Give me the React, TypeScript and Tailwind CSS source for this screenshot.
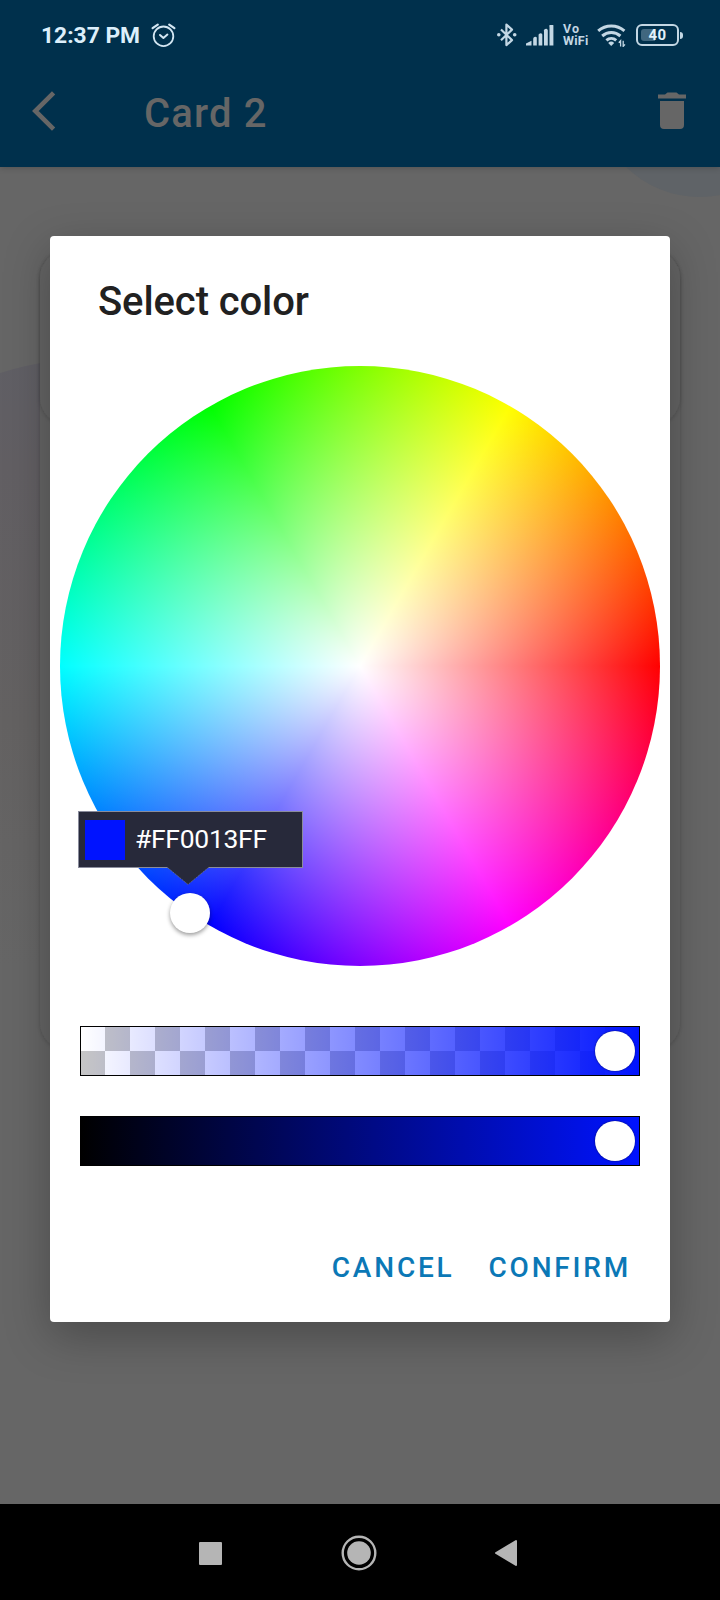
import React from "react";

function AlarmIcon() {
  return (
    <svg width="25" height="25" viewBox="0 0 25 25" fill="none" stroke="#d3e6f2" strokeWidth="1.8" strokeLinecap="round" strokeLinejoin="round">
      <circle cx="12.5" cy="13.3" r="9.8" />
      <path d="M9 12l3.4 3 4-3.4" strokeWidth="2" />
      <path d="M1.6 5.2L6.8 1.6M23.4 5.2l-5.2-3.6" strokeWidth="2.2" />
    </svg>
  );
}

function BluetoothIcon() {
  return (
    <svg width="20" height="24" viewBox="0 0 20 24" fill="none" stroke="#c3d7e4" strokeWidth="2.2" strokeLinejoin="round">
      <path d="M4 6.500l11 10.600-5.600 5V1.600l5.600 5-11 10.600" />
      <circle cx="1.8" cy="11.8" r="1.8" fill="#c3d7e4" stroke="none" />
      <circle cx="17.7" cy="11.8" r="1.8" fill="#c3d7e4" stroke="none" />
    </svg>
  );
}

function SignalIcon() {
  return (
    <svg width="28" height="21" viewBox="0 0 28 21" fill="#c3d7e4">
      <path d="M0 20.600V18.600L5.500 15.800V20.600Z" />
      <path d="M7.200 20.600V14a2 2 0 0 1 3.600-1.400V20.600Z" />
      <path d="M12.600 20.600V11a2 2 0 0 1 3.700-1.500V20.600Z" />
      <path d="M18 20.600V6.800a2 2 0 0 1 3.800-1.600V20.600Z" />
      <path d="M23.500 20.600V1.900a2 2 0 0 1 3.900-1.300V20.600Z" />
    </svg>
  );
}

function WifiIcon() {
  return (
    <svg width="29" height="23" viewBox="0 0 29 23" fill="none" stroke="#c3d7e4" strokeWidth="3">
      <path d="M1.200 6.800a20 20 0 0 1 26.200 0" />
      <path d="M5.200 12a13.800 13.800 0 0 1 18.200 0" />
      <path d="M9.400 16.400a7.500 7.500 0 0 1 9.800 0" />
      <path d="M11.200 18.900a4.400 4.400 0 0 1 6 0l-3 3.200z" fill="#c3d7e4" stroke="none" />
      <path d="M23.600 22.400V16.800l-1.800 2M26.200 16.800v5.600l1.800-2" strokeWidth="1.3" />
    </svg>
  );
}

function BatteryIcon() {
  return (
    <div className="flex items-center">
      <div className="relative flex h-[22px] w-[43px] items-center justify-center rounded-[6px] border-[2.5px] border-[#c3d7e4]">
        <div className="absolute left-[3px] top-[3px] h-[12px] w-[14px] rounded-l-[3px] bg-[#40677f]" />
        <span className="relative text-[15px] font-bold leading-none tracking-[0.3px] text-[#e3f1fa]">40</span>
      </div>
      <div className="ml-px h-[7px] w-[3px] rounded-r bg-[#c3d7e4]" />
    </div>
  );
}

function StatusBar() {
  return (
    <div className="flex h-[70px] items-center pl-[41px] pr-[37px]">
      <span className="w-[99px] whitespace-nowrap pt-[2px] text-[22.8px] font-bold leading-none text-[#dceffb]">12:37 PM</span>
      <div className="ml-[11px]"><AlarmIcon /></div>
      <div className="ml-auto flex items-center">
        <BluetoothIcon />
        <div className="ml-[9px]"><SignalIcon /></div>
        <div className="ml-[9px] flex w-[26px] flex-col text-[12.5px] font-bold leading-[12px] tracking-[0.3px] text-[#c3d7e4]">
          <span className="tracking-[1px]">Vo</span>
          <span>WiFi</span>
        </div>
        <div className="ml-[8px]"><WifiIcon /></div>
        <div className="ml-[10px]"><BatteryIcon /></div>
      </div>
    </div>
  );
}

function AppBar() {
  return (
    <div className="flex h-[97px] items-start pl-[32px] pr-[34px]">
      <svg className="mt-[21px]" width="24" height="40" viewBox="0 0 24 40" fill="none" stroke="#666" strokeWidth="4.6">
        <path d="M21.600 1.800L3.300 20l18.300 18.200" />
      </svg>
      <h1 className="ml-[88px] mt-[20px] whitespace-nowrap text-[40px] font-medium leading-[47px] tracking-[1.15px] text-[#666]">Card 2</h1>
      <svg className="ml-auto mt-[22px]" width="28" height="37" viewBox="0 0 28 37" fill="#666">
        <path d="M0 2.500h7L9.500 .5h9L21 2.500h7v4H0zM2 9h24v24a4 4 0 0 1-4 4H6a4 4 0 0 1-4-4z" />
      </svg>
    </div>
  );
}

function Backdrop() {
  return (
    <svg className="absolute inset-0" width="720" height="1337" viewBox="0 0 720 1337">
      <defs>
        <linearGradient id="blob" x1="0" y1="0" x2="0" y2="1">
          <stop offset="0" stopColor="#605f65" />
          <stop offset="0.18" stopColor="#625f63" />
          <stop offset="0.6" stopColor="#646262" />
          <stop offset="1" stopColor="#666666" />
        </linearGradient>
        <filter id="soft" x="-10%" y="-10%" width="120%" height="120%">
          <feDropShadow dx="0" dy="1" stdDeviation="2" floodColor="#000" floodOpacity="0.2" />
        </filter>
      </defs>
      <circle cx="700" cy="-76" r="106" fill="#5f6367" />
      <path d="M0 206Q50 190 110 190V800H0Z" fill="url(#blob)" />
      <g fill="#656565" filter="url(#soft)">
        <rect x="40" y="83" width="640" height="800" rx="28" />
      </g>
      <g fill="#656565" filter="url(#soft)">
        <rect x="40" y="83" width="640" height="175" rx="28" />
      </g>
    </svg>
  );
}

function ColorWheel() {
  return (
    <div className="relative mx-auto h-[600px] w-[600px]">
      <div className="h-full w-full rounded-full bg-[radial-gradient(circle_closest-side,#fff,rgba(255,255,255,0)),conic-gradient(from_90deg,#f00,#f0f,#00f,#0ff,#0f0,#ff0,#f00)]" />
      <div className="absolute left-[110px] top-[527px] h-[40px] w-[40px] rounded-full bg-white shadow-[0_2px_4px_rgba(0,0,0,0.4)]" />
      <div className="absolute left-[18px] top-[445px] flex h-[57px] w-[225px] items-center border border-[#8a8c9c] bg-[#27293a] pl-[6px]">
        <div className="h-[40px] w-[40px] bg-[#0013ff]" />
        <span className="ml-[10px] text-[26.5px] leading-none tracking-[-0.3px] text-white">#FF0013FF</span>
        <svg className="absolute left-[88px] top-[54.5px]" width="42" height="18" viewBox="0 0 42 18">
          <path d="M0 0H42L21 17.500Z" fill="#27293a" />
          <path d="M1 1L21 17.500L41 1" fill="none" stroke="#6c7083" strokeWidth="0.8" strokeDasharray="2 1" />
        </svg>
      </div>
    </div>
  );
}

function Thumb() {
  return <div className="h-[40px] w-[40px] rounded-full bg-white shadow-[0_0_2px_rgba(0,0,0,0.6)]" />;
}

function Sliders() {
  return (
    <div className="mx-[30px] mt-[60px] flex flex-col gap-[40px]">
      <div className="relative flex h-[50px] items-center justify-end bg-[linear-gradient(to_right,rgba(0,19,255,0),#0013ff),conic-gradient(#c6c6c6_25%,#fff_0_50%,#c6c6c6_0_75%,#fff_0)] bg-[size:100%_100%,50px_50px] pr-[5px]">
        <div className="absolute inset-0 border border-black" />
        <Thumb />
      </div>
      <div className="flex h-[50px] items-center justify-end border border-black bg-[linear-gradient(to_right,#000,#0013ff)] pr-[4px]">
        <Thumb />
      </div>
    </div>
  );
}

function Dialog() {
  return (
    <div className="absolute left-[50px] top-[236px] flex h-[1086px] w-[620px] flex-col rounded-[4px] bg-white shadow-[0_14px_46px_rgba(0,0,0,0.28)]">
      <h2 className="ml-[48px] mt-[42px] h-[88px] whitespace-nowrap text-[40px] font-medium leading-[47px] tracking-[-0.1px] text-[#212121]">Select color</h2>
      <ColorWheel />
      <Sliders />
      <div className="mt-[82px] flex justify-end gap-[34px] pr-[39px] text-[28px] font-medium leading-[40px] tracking-[2.8px] text-[#0b78b6]">
        <button>CANCEL</button>
        <button>CONFIRM</button>
      </div>
    </div>
  );
}

function NavBar() {
  return (
    <div className="flex h-[96px] items-center bg-black pl-[199px] pt-[2px]">
      <div className="h-[23px] w-[23px] rounded-[1px] bg-[#b5b5b5]" />
      <svg className="ml-[119px]" width="36" height="36" viewBox="0 0 36 36">
        <circle cx="18" cy="18" r="16.300" fill="none" stroke="#b5b5b5" strokeWidth="2.400" />
        <circle cx="18" cy="18" r="11.800" fill="#b5b5b5" />
      </svg>
      <svg className="ml-[117px]" width="24" height="28" viewBox="0 0 24 28">
        <path d="M2 14L22 2V26Z" fill="#b5b5b5" stroke="#b5b5b5" strokeWidth="2" strokeLinejoin="round" />
      </svg>
    </div>
  );
}

export default function App() {
  return (
    <div className="relative flex h-[1600px] w-[720px] flex-col overflow-hidden bg-[#666] font-['Roboto',sans-serif]">
      <header className="relative z-10 h-[167px] bg-[#00304c] shadow-[0_1px_6px_rgba(0,0,0,0.2)]">
        <StatusBar />
        <AppBar />
      </header>
      <main className="relative flex-1 overflow-hidden">
        <Backdrop />
      </main>
      <NavBar />
      <Dialog />
    </div>
  );
}
